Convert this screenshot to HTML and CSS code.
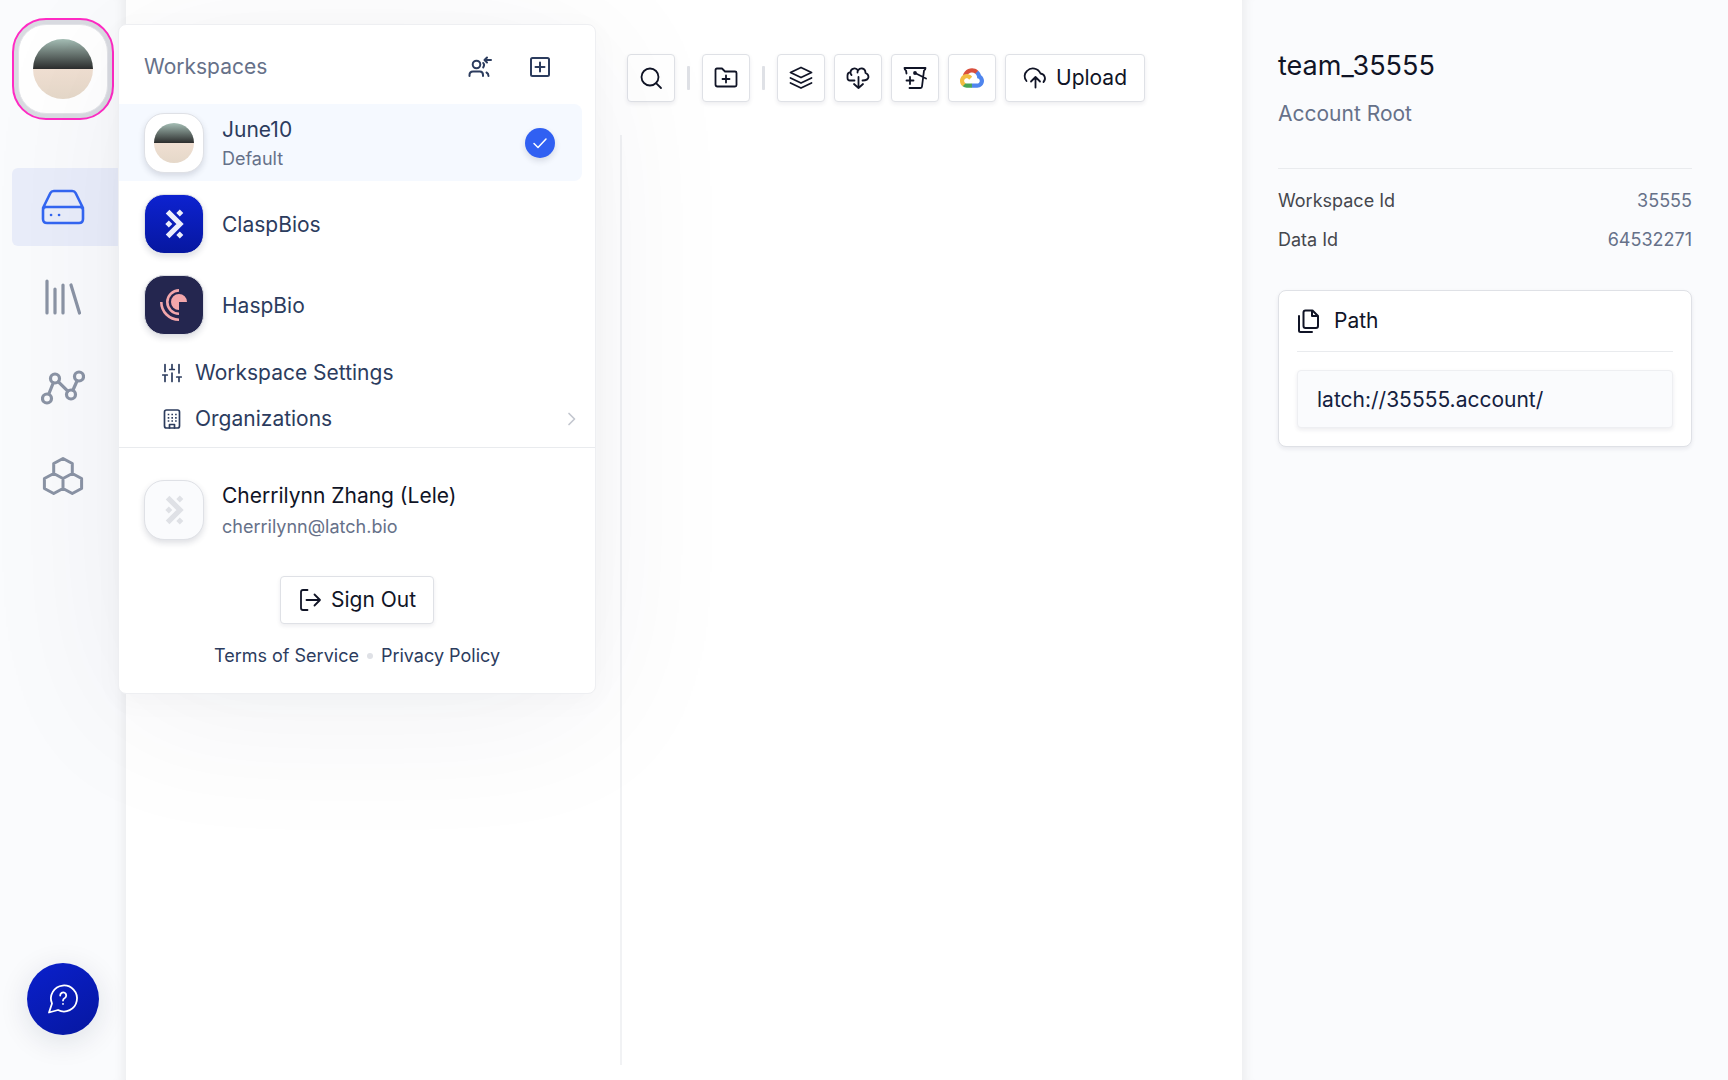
FILE: index.html
```html
<!DOCTYPE html>
<html lang="en">
<head>
  <meta charset="utf-8">
  <title>Latch</title>
  <link rel="stylesheet" href="styles.css">
</head>
<body>
  <svg class="defs" aria-hidden="true">
    <symbol id="latch-mark" viewBox="0 0 19 30">
      <path d="M2.6 2.6L15 15L2.6 27.4" fill="none" stroke="currentColor" stroke-width="5.2"/>
      <path d="M14.8 .4l3.5 3.5-3.5 3.5-3.5-3.5zM3.8 11.5l3.5 3.5-3.5 3.5L.3 15zM14.8 22.6l3.5 3.5-3.5 3.5-3.5-3.5z" fill="currentColor"/>
    </symbol>
  </svg>

  <div class="app">
    <aside class="sidebar">
      <button class="account-button" aria-label="Account menu">
        <span class="account-tile"><span class="face face-large"></span></span>
      </button>
      <nav class="nav">
        <a class="nav-item active" href="#" aria-label="Data">
          <svg viewBox="0 0 44 44" stroke-width="2.6"><path d="M2 23L9.4 8Q10.4 6 12.8 6H31.2Q33.600 6 34.600 8L42 23M5 22H39Q42 22 42 25V34Q42 38 38 38H6Q2 38 2 34V25Q2 22 5 22Z"/><path d="M10 30h.1M18 30h.1"/></svg>
        </a>
        <a class="nav-item" href="#" aria-label="Registry">
          <svg viewBox="0 0 44 44" stroke-width="3.2"><path d="M6 6V38M14 14V38M22 10V38M30 10L38.500 38"/></svg>
        </a>
        <a class="nav-item" href="#" aria-label="Workflows">
          <svg viewBox="0 0 44 44" stroke-width="3.2"><circle cx="6" cy="33.500" r="4.500"/><circle cx="14" cy="13.500" r="4.500"/><circle cx="30" cy="29.500" r="4.500"/><circle cx="38" cy="11.500" r="4.500"/><path d="M8 28.500L12.200 18M17.400 16.800L26.800 26.200M32 25L36 16"/></svg>
        </a>
        <a class="nav-item" href="#" aria-label="Pods">
          <svg viewBox="0 0 44 44" stroke-width="3"><path d="M22 3.500L31.300 8.500V18.500L22 23.500L12.700 18.500V8.500ZM12.700 18.500L22 23.500V33.500L12.700 38.500L3.400 33.500V23.500ZM31.300 18.500L40.600 23.500V33.500L31.300 38.500L22 33.500V23.500Z"/></svg>
        </a>
      </nav>
      <button class="help-button" aria-label="Help">
        <svg viewBox="0 0 32 32"><path d="M2 29.500L5 20.500A13 13 0 1 1 11 27Z"/><path d="M13.200 12.500a3 3 0 1 1 4.600 2.500c-1.200.7-1.800 1.200-1.800 2.500M16 20.800v.1"/></svg>
      </button>
    </aside>

    <main class="main">
      <div class="toolbar">
        <button class="tool" aria-label="Search"><svg viewBox="0 0 24 24"><circle cx="11" cy="11" r="8.500"/><path d="M17.300 17.300L22 22"/></svg></button>
        <span class="tool-divider"></span>
        <button class="tool" aria-label="New folder"><svg viewBox="0 0 24 24"><path d="M1.500 18.500V4Q1.500 2.500 3 2.500H8L11 5.500H21Q22.500 5.500 22.500 7V19Q22.500 20.500 21 20.500H3.500Q1.500 20.500 1.500 18.500ZM12 9.500V16.500M8.500 13H15.500"/></svg></button>
        <span class="tool-divider"></span>
        <div class="tool-group">
          <button class="tool" aria-label="Layers"><svg viewBox="0 0 24 24"><path d="M12 1.500L22.500 6.500L12 11.500L1.500 6.500ZM1.500 12L12 17L22.500 12M1.500 17L12 22L22.500 17"/></svg></button>
          <button class="tool" aria-label="Download"><svg viewBox="0 0 24 24"><path d="M8.500 14.500H4Q1.500 14.500 1.500 12V9.500Q1.500 6.500 4.500 6.200A4 4 0 0 1 12 4.500Q13.500 2.200 16 2.500Q19.500 3 19.500 7Q22.500 8 22.500 11Q22 14.500 16.500 14.500M4.500 6.200Q4.500 8 5.500 9M12 4.500Q11.500 5.500 11.500 6.500M12.500 11V22M8 18L12.500 22L17 18"/></svg></button>
          <button class="tool" aria-label="Mount bucket"><svg viewBox="0 0 24 24"><path d="M3.500 7.500L3 4.500Q1.500 4 1.500 2H22.500Q22.500 4 21 4.500L19 20.500Q18.900 22 17.500 22H6.500M3.500 14.500H10.500M7 11V18M12 7L23 12.500"/><circle cx="12" cy="7" r="1"/></svg></button>
          <button class="tool" aria-label="Google Cloud"><svg class="gcp" viewBox="0 0 256 206">
            <path fill="#d94f3d" d="M170.300 56.800L192.500 34.600L194 25.200C153.400-11.700 89-7.500 52.400 33.900C42.300 45.400 34.700 59.800 30.700 74.600L38.700 73.400L83.200 66.100L86.600 62.600C106.400 40.900 139.900 37.900 162.800 56.400Z"/>
            <path fill="#4f85ee" d="M224.200 73.900C219.100 55.100 208.600 38.100 194 25.200L162.800 56.400C175.900 67.200 183.500 83.400 183.100 100.500V106C198.500 106 210.900 118.500 210.900 133.800C210.900 149.200 198.500 161.300 183.100 161.300H127.500L122 167.200V200.600L127.500 205.800H183.100C223.100 206.100 255.700 174.300 256 134.400C256.200 110.200 244.300 87.500 224.200 73.900"/>
            <path fill="#48a556" d="M71.900 205.800H127.500V161.300H71.900C67.900 161.300 64.100 160.400 60.500 158.800L52.600 161.200L30.200 183.500L28.200 191C40.800 200.500 56.100 205.900 71.900 205.800"/>
            <path fill="#f2bd42" d="M71.900 61.400C31.900 61.700-.2 94.200 0 134.200C.1 156.500 10.500 177.400 28.200 191L60.500 158.800C46.500 152.500 40.300 136 46.600 122C52.900 108 69.400 101.800 83.400 108.100C89.500 110.900 94.500 115.900 97.200 122L129.500 89.800C115.800 71.800 94.500 61.300 71.900 61.400"/>
          </svg></button>
          <button class="tool upload"><svg viewBox="0 0 24 24"><path d="M3.500 15A7 7 0 0 1 4 5A8.200 8.200 0 0 1 17.500 7.500A5 5 0 0 1 20.500 16M12.500 21.500V11.500M8 15.500L12.500 11L17 15.500"/></svg>Upload</button>
        </div>
      </div>
      <div class="browser">
        <div class="tree"></div>
        <div class="files"></div>
      </div>
    </main>

    <aside class="details">
      <h1 class="details-title">team_35555</h1>
      <p class="details-type">Account Root</p>
      <dl class="props">
        <div class="prop"><dt>Workspace Id</dt><dd>35555</dd></div>
        <div class="prop"><dt>Data Id</dt><dd>64532271</dd></div>
      </dl>
      <div class="path-card">
        <label class="path-label" for="path">
          <svg viewBox="0 0 24 24"><path d="M8.500 1.500H15.500L21 7V17Q21 19 19 19H8.500Q6.500 19 6.500 17V3.500Q6.500 1.500 8.500 1.500ZM15 1.500V7H21M2 7V21.500Q2 23 3.500 23H15"/></svg>
          Path
        </label>
        <input class="path-field" id="path" type="text" value="latch://35555.account/" readonly>
      </div>
    </aside>

    <div class="menu">
      <div class="menu-header">
        <h2 class="menu-title">Workspaces</h2>
        <button class="icon-button" aria-label="Join workspace"><svg viewBox="0 0 24 24"><circle cx="8.500" cy="9.500" r="3.800"/><path d="M1.500 21V20Q1.500 16.500 5 16.500H12Q15 16.500 15 20V21M15.200 8Q17 9.500 15.200 12.500M18.500 17.500Q20.500 18.500 20.500 21M23 5H17.500M19 2.500L16.500 5L19 7.500"/></svg></button>
        <button class="icon-button" aria-label="New workspace"><svg viewBox="0 0 24 24"><rect x="3" y="3" width="18" height="18" rx="1.500"/><path d="M12 7.500V16.500M7.500 12H16.500"/></svg></button>
      </div>

      <div class="workspaces">
        <button class="workspace selected">
          <span class="tile"><span class="face"></span></span>
          <span class="workspace-text">June10<small>Default</small></span>
          <span class="check"><svg viewBox="0 0 16 16"><path d="M2 8.500L6 12.500L14 4"/></svg></span>
        </button>
        <button class="workspace">
          <span class="tile tile-clasp"><svg class="mark"><use href="#latch-mark"/></svg></span>
          <span class="workspace-text">ClaspBios</span>
        </button>
        <button class="workspace">
          <span class="tile tile-hasp"><svg class="hasp-mark" viewBox="0 0 28 32"><path d="M19 13H27A8 8 0 1 0 19 21Z" fill="currentColor"/><path d="M19 1.400A11.600 11.600 0 0 0 19 24.800M1.300 13A17.700 17.700 0 0 0 19 30.700" fill="none" stroke="currentColor" stroke-width="2.600"/></svg></span>
          <span class="workspace-text">HaspBio</span>
        </button>
      </div>

      <div class="menu-links">
        <a class="menu-link" href="#"><svg viewBox="0 0 20 20"><path d="M3 1.500V8.500M3 12V18.500M.7 12H5.300M10 1.500V6.500M10 10V18.500M7.700 6.500H12.300M17 1.500V10M17 14V18.500M14.700 14H19.300"/></svg>Workspace Settings</a>
        <a class="menu-link" href="#"><svg viewBox="0 0 20 20"><rect x="2.500" y="1" width="15" height="18" rx="2"/><path d="M7.500 19V15.500H12.500V19"/><path d="M5.700 5.500h9M5.700 8.800h9M5.700 12h9" stroke-dasharray="1.600 2.100" stroke-linecap="butt"/></svg>Organizations
          <svg class="chevron" viewBox="0 0 20 20"><path d="M7 4.500L12.500 10L7 15.500"/></svg></a>
      </div>

      <div class="menu-footer">
        <div class="user">
          <span class="tile tile-empty"><svg class="mark"><use href="#latch-mark"/></svg></span>
          <div class="user-text">
            <div class="user-name">Cherrilynn Zhang (Lele)</div>
            <div class="user-email">cherrilynn@latch.bio</div>
          </div>
        </div>
        <button class="tool sign-out"><svg viewBox="0 0 24 24"><path d="M9.500 2H5Q3 2 3 4V20Q3 22 5 22H9.500M8.500 12H22M16.500 6.500L22 12L16.500 17.500"/></svg>Sign Out</button>
        <div class="legal">
          <a href="#">Terms of Service</a>
          <span class="dot"></span>
          <a href="#">Privacy Policy</a>
        </div>
      </div>
    </div>
  </div>
</body>
</html>
```

FILE: styles.css
```css
* {
  box-sizing: border-box;
}

body {
  margin: 0;
  font-family: Inter, "Liberation Sans", sans-serif;
  font-size: 21px;
  font-weight: 400;
  line-height: 30px;
  color: #2c3c5e;
  background-color: #fff;
}

button,
input {
  font: inherit;
  color: inherit;
}

button {
  padding: 0;
  border: none;
  background: none;
  cursor: pointer;
}

a {
  color: inherit;
  text-decoration: none;
}

h1,
h2,
p,
dl,
dd {
  margin: 0;
  font-weight: inherit;
}

svg {
  flex: none;
  fill: none;
  stroke: currentColor;
  stroke-linecap: round;
  stroke-linejoin: round;
}

.defs {
  position: absolute;
  width: 0;
  height: 0;
}

.app {
  position: relative;
  display: flex;
  min-height: 100vh;
}

/* Sidebar */
.sidebar {
  display: flex;
  flex-direction: column;
  width: 126px;
  padding: 18px 0 45px;
  background-color: #fafbfd;
  box-shadow: inset -12px 0 12px -10px rgba(0, 0, 0, 0.07);
}

.account-button {
  width: 102px;
  height: 102px;
  margin-left: 12px;
  padding: 4px;
  border: 2px solid #ff2bc4;
  border-radius: 34px;
  background-color: #d9dbe1;
}

.account-tile {
  display: flex;
  align-items: center;
  justify-content: center;
  height: 90px;
  border: 1px solid #e3e4e8;
  border-radius: 28px;
  background-color: #fff;
}

.face {
  width: 40px;
  height: 40px;
  border-radius: 50%;
  background: linear-gradient(#a5beb5 0, #2c2d2d 50%, #f0dfd2 50%, #e5d8c9 100%);
}

.face-large {
  width: 60px;
  height: 60px;
}

.nav {
  display: flex;
  flex-direction: column;
  gap: 12px;
  margin-top: 48px;
  margin-left: 12px;
}

.nav-item {
  display: flex;
  align-items: center;
  height: 78px;
  padding-left: 29px;
  border-radius: 6px 0 0 6px;
  color: #8b94a5;
}

.nav-item svg {
  width: 44px;
  height: 44px;
}

.nav-item.active {
  color: #3366f2;
  background-color: #e9edfa;
}

.help-button {
  display: flex;
  align-items: center;
  justify-content: center;
  width: 72px;
  height: 72px;
  margin: auto auto 0 27px;
  border-radius: 50%;
  color: #fff;
  background: linear-gradient(150deg, #0a20cc, #0617a0);
  box-shadow: 0 6px 30px rgba(20, 30, 60, 0.12);
}

.help-button svg {
  width: 32px;
  height: 32px;
  stroke-width: 1.8;
}

/* Main area */
.main {
  display: flex;
  flex: 1;
  flex-direction: column;
  padding-bottom: 15px;
}

.toolbar {
  display: flex;
  align-items: center;
  gap: 12px;
  height: 135px;
  padding: 21px 96px 0 501px;
}

.tool-group {
  display: flex;
  gap: 9px;
}

.tool {
  display: flex;
  align-items: center;
  justify-content: center;
  width: 48px;
  height: 48px;
  border: 1px solid #dfe1e6;
  border-radius: 4px;
  color: #101426;
  background-color: #fff;
  box-shadow: 0 2px 4px rgba(20, 30, 60, 0.08);
}

.tool svg {
  width: 24px;
  height: 24px;
  stroke-width: 1.8;
}

.tool .gcp {
  height: 20px;
  stroke: none;
}

.tool.upload,
.tool.sign-out {
  gap: 9px;
  width: auto;
  padding: 0 17px;
}

.tool-divider {
  width: 3px;
  height: 24px;
  border-radius: 1px;
  background-color: #dfe1e6;
}

.browser {
  display: flex;
  flex: 1;
}

.tree {
  width: 496px;
  border-right: 2px solid #f1f2f4;
}

/* Details panel */
.details {
  width: 486px;
  padding: 48px 36px;
  background-color: #fafbfd;
  box-shadow: inset 12px 0 12px -10px rgba(0, 0, 0, 0.07);
}

.details-title {
  font-size: 27px;
  line-height: 36px;
  color: #101426;
}

.details-type {
  margin-top: 15px;
  color: #667189;
}

.props {
  margin-top: 39px;
  padding-top: 17px;
  border-top: 1px solid #e9ebee;
  font-size: 18px;
}

.prop {
  display: flex;
  justify-content: space-between;
  margin-bottom: 9px;
  color: #45474d;
}

.prop dd {
  color: #667189;
}

.path-card {
  margin-top: 35px;
  padding: 15px 18px 18px;
  border: 1px solid #dfe1e6;
  border-radius: 8px;
  background-color: #fff;
  box-shadow: 0 2px 4px rgba(20, 30, 60, 0.08);
}

.path-label {
  display: flex;
  align-items: center;
  gap: 13px;
  padding-bottom: 15px;
  border-bottom: 1px solid #e9ebee;
  color: #101426;
}

.path-label svg {
  width: 24px;
  height: 24px;
  stroke-width: 2;
}

.path-field {
  display: block;
  width: 100%;
  height: 58px;
  margin-top: 18px;
  padding: 0 19px;
  border: 1px solid #eeeff2;
  border-radius: 4px;
  color: #14213f;
  background-color: #fafbfd;
  box-shadow: 0 2px 4px rgba(20, 30, 60, 0.08);
}

/* Account menu, opens over the page */
.menu {
  position: absolute;
  top: 24px;
  left: 118px;
  width: 478px;
  border: 1px solid #eeeff2;
  border-radius: 8px;
  background-color: #fff;
  box-shadow: 0 6px 30px rgba(20, 30, 60, 0.03), 0 20px 160px rgba(20, 30, 60, 0.06);
}

.menu-header {
  display: flex;
  align-items: center;
  gap: 36px;
  height: 79px;
  padding: 4px 43px 0 25px;
}

.menu-title {
  margin-right: auto;
  font-size: 21px;
  color: #667189;
}

.icon-button {
  width: 24px;
  height: 24px;
}

.icon-button svg {
  display: block;
  width: 24px;
  height: 24px;
  stroke-width: 2;
}

.workspaces {
  display: flex;
  flex-direction: column;
  gap: 4px;
  padding-right: 13px;
}

.workspace {
  display: flex;
  align-items: center;
  gap: 18px;
  height: 77px;
  padding: 0 27px 0 25px;
  border-radius: 0 8px 8px 0;
  text-align: left;
}

.workspace.selected {
  background-color: #f5f9ff;
}

.workspace-text {
  flex: 1;
  padding-top: 2px;
  line-height: 30px;
}

.workspace-text small {
  display: block;
  font-size: 18px;
  line-height: 27px;
  color: #667189;
}

.tile {
  display: flex;
  flex: none;
  align-items: center;
  justify-content: center;
  width: 60px;
  height: 60px;
  border: 1px solid #dfe1e6;
  border-radius: 20px;
  background-color: #fff;
  box-shadow: 0 3px 6px rgba(20, 30, 60, 0.14);
}

.tile svg {
  stroke: none;
  stroke-linecap: butt;
  stroke-linejoin: miter;
}

.tile-clasp {
  color: #eceefb;
  background: linear-gradient(#0d22d0, #0617a0);
}

.tile-hasp {
  color: #f2a6ab;
  background-color: #24264f;
}

.tile-empty {
  color: #dfe1e6;
  background-color: #fafbfd;
}

.mark {
  width: 19px;
  height: 30px;
}

.hasp-mark {
  width: 28px;
  height: 32px;
}

.check {
  display: flex;
  align-items: center;
  justify-content: center;
  width: 30px;
  height: 30px;
  border-radius: 50%;
  color: #fff;
  background-color: #3060f2;
  box-shadow: 0 3px 6px rgba(20, 30, 60, 0.14);
}

.check svg {
  width: 16px;
  height: 16px;
  stroke-width: 1.5;
}

.menu-links {
  padding: 7px 13px 5px 43px;
}

.menu-link {
  display: flex;
  align-items: center;
  gap: 13px;
  height: 46px;
}

.menu-link svg {
  width: 20px;
  height: 20px;
  stroke-width: 1.7;
}

.menu-link .chevron {
  margin-left: auto;
  color: #c3c7cf;
}

.menu-footer {
  padding: 29px 25px 22px;
  border-top: 1px solid #e9ebee;
}

.user {
  display: flex;
  align-items: center;
  gap: 18px;
}

.user-text {
  padding-top: 2px;
}

.user-name {
  line-height: 33px;
  color: #101426;
}

.user-email {
  font-size: 18px;
  color: #667189;
}

.tool.sign-out {
  margin: 34px auto 0;
}

.legal {
  display: flex;
  align-items: center;
  justify-content: center;
  gap: 8px;
  margin-top: 17px;
  font-size: 18px;
}

.dot {
  width: 6px;
  height: 6px;
  border-radius: 50%;
  background-color: #dfe1e6;
}
```
